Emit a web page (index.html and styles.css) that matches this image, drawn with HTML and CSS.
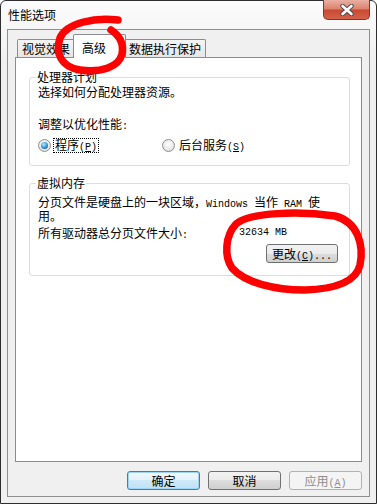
FILE: index.html
```html
<!DOCTYPE html>
<html lang="zh-CN">
<head>
  <meta charset="UTF-8">
  <title>性能选项</title>
  <link rel="stylesheet" href="styles.css">
</head>
<body>
  <div class="window">
    <div class="titlebar">
      <div class="title">性能选项</div>
      <button class="close" title="关闭">
        <svg width="14" height="12" viewBox="0 0 14 12">
          <path d="M2.5 2 L11.5 10 M11.5 2 L2.5 10" stroke="#4a4a4a" stroke-width="4.4" stroke-linecap="round"/>
          <path d="M2.5 2 L11.5 10 M11.5 2 L2.5 10" stroke="#ffffff" stroke-width="2.6" stroke-linecap="round"/>
        </svg>
      </button>
    </div>

    <div class="client">
      <div class="tabs">
        <div class="tab tab-visual">视觉效果</div>
        <div class="tab active">高级</div>
        <div class="tab tab-dep">数据执行保护</div>
      </div>

      <div class="panel">
        <fieldset class="group">
          <legend>处理器计划</legend>
          <p class="line">选择如何分配处理器资源。</p>
          <p class="line adjust">调整以优化性能<span class="lat">:</span></p>
          <div class="radios">
            <label class="option">
              <span class="radio on"></span>
              <span class="caption focus">程序<span class="lat">(<u>P</u>)</span></span>
            </label>
            <label class="option">
              <span class="radio"></span>
              <span class="caption">后台服务<span class="lat">(<u>S</u>)</span></span>
            </label>
          </div>
        </fieldset>

        <fieldset class="group group-vm">
          <legend>虚拟内存</legend>
          <p class="line note">分页文件是硬盘上的一块区域，<span class="lat">Windows </span>当作<span class="lat"> RAM </span>使用。</p>
          <div class="size-row">
            <span>所有驱动器总分页文件大小<span class="lat">:</span></span>
            <span class="lat">32634 MB</span>
          </div>
          <div class="change-row">
            <button class="btn btn-change">更改<span class="lat">(<u>C</u>)...</span></button>
          </div>
        </fieldset>
      </div>

      <div class="actions">
        <button class="btn default">确定</button>
        <button class="btn">取消</button>
        <button class="btn" disabled>应用<span class="lat">(<u>A</u>)</span></button>
      </div>
    </div>

    <svg class="marks" width="377" height="504" viewBox="0 0 377 504">
      <path d="M118 20 C 95 17, 66 23, 60 38 C 55 53, 61 67, 80 70 C 101 73, 119 67, 122 54 C 124 44, 120 36, 111 30" />
      <path d="M236 224 C 250 212, 300 211, 335 216 C 358 222, 364 245, 360 265 C 356 282, 335 289, 305 290 C 275 290, 245 283, 232 268 C 224 256, 225 236, 236 224 Z" />
    </svg>
  </div>
</body>
</html>
```

FILE: styles.css
```css
* {
  box-sizing: border-box;
}
body {
  margin: 0;
  font-family: "Noto Sans CJK SC", sans-serif;
  font-size: 12px;
  color: #000;
}
.window {
  position: relative;
  width: 377px;
  height: 504px;
  border: 1px solid #2e2e2e;
  border-radius: 6px 6px 0 0;
  background: linear-gradient(#fcfcfc, #f0f0f0 60px);
  padding: 0 6px 6px;
  display: flex;
  flex-direction: column;
}
.titlebar {
  height: 28px;
  display: flex;
  justify-content: space-between;
  align-items: flex-start;
}
.title {
  margin: 7px 0 0 1px;
  line-height: 14px;
}
.close {
  width: 47px;
  height: 20px;
  margin-top: -1px;
  padding: 0;
  border: 1px solid #8a3324;
  border-top: 0;
  border-radius: 0 0 5px 5px;
  background: linear-gradient(#eab0a2, #dc8470 45%, #c84a33 55%, #d4634c);
  display: flex;
  align-items: center;
  justify-content: center;
}
.client {
  flex: 1;
  border: 1px solid #8e8f8f;
  background: #f0f0f0;
  padding: 4px 7px 0;
  display: flex;
  flex-direction: column;
}

/* tabs */
.tabs {
  display: flex;
  align-items: flex-end;
  height: 23px;
  padding-left: 2px;
}
.tab {
  height: 18px;
  border: 1px solid #898c95;
  border-bottom: 0;
  border-radius: 2px 2px 0 0;
  background: linear-gradient(#f4f4f4, #e6e6e6);
  line-height: 17px;
  text-align: center;
}
.tab-visual {
  width: 58px;
}
.tab-dep {
  width: 82px;
}
.tab.active {
  position: relative;
  width: 53px;
  height: 24px;
  margin: 0 -2px -1px;
  padding: 2px 0 0 8px;
  background: #fff;
  line-height: 22px;
  text-align: left;
}
.panel {
  height: 405px;
  border: 1px solid #898c95;
  background: #fff;
  padding: 12px 11px 0 13px;
}

/* group boxes */
.group {
  margin: 0;
  min-width: 0;
  border: 1px solid #d5dfe5;
  border-radius: 3px;
  padding: 1px 11px 14px 8px;
}
.group legend {
  padding: 0 1px;
  margin-left: -2px;
  line-height: 14px;
}
.group-vm {
  margin-top: 10px;
  padding-top: 5px;
  padding-bottom: 12px;
}
.line {
  margin: 0;
  line-height: 13px;
}
.adjust {
  margin-top: 19px;
}
.note {
  width: 288px;
}
.lat {
  font-family: "Liberation Mono", monospace;
  font-size: 10px;
  line-height: 8px;
}

/* radios */
.radios {
  display: grid;
  grid-template-columns: 124px auto;
  margin-top: 7px;
  height: 13px;
}
.option {
  display: flex;
  align-items: center;
}
.radio {
  width: 13px;
  height: 13px;
  border-radius: 50%;
  border: 1px solid #8e8f8f;
  background: radial-gradient(circle at 50% 40%, #ffffff, #e6e6e6 65%, #cdcdcd);
  display: flex;
  align-items: center;
  justify-content: center;
}
.radio.on::after {
  content: "";
  width: 7px;
  height: 7px;
  border-radius: 50%;
  background: radial-gradient(circle at 40% 35%, #b4ecff, #2b93d6 55%, #0d3f6e);
}
.caption {
  margin-left: 2px;
  padding: 0 1px;
  border: 1px dotted transparent;
  line-height: 11px;
}
.caption.focus {
  border-color: #000;
}

/* virtual memory */
.size-row {
  display: grid;
  grid-template-columns: 201px auto;
  align-items: center;
  margin-top: 4px;
  height: 13px;
  line-height: 13px;
}
.change-row {
  display: flex;
  justify-content: flex-end;
  margin-top: 5px;
}

/* buttons */
.btn {
  width: 73px;
  height: 19px;
  padding: 0;
  border: 1px solid #707070;
  border-radius: 3px;
  background: linear-gradient(#f2f2f2, #ebebeb 50%, #dddddd 50%, #cfcfcf);
  font: inherit;
  color: #000;
  line-height: 17px;
}
.btn-change {
  width: 72px;
}
.btn.default {
  border-color: #3c7fb1;
  background: linear-gradient(#f0f8fd, #e3f2fb 50%, #cfe9f9 50%, #bfe1f6);
  box-shadow: inset 0 0 0 1px #9fd5f3;
}
.btn:disabled {
  border-color: #adb2b5;
  background: #f4f4f4;
  color: #8d8d8d;
}
.actions {
  display: flex;
  justify-content: flex-end;
  gap: 8px;
  margin-top: 9px;
}

/* red hand-drawn marks on top of the dialog */
.marks {
  position: absolute;
  top: -1px;
  left: -1px;
  pointer-events: none;
}
.marks path {
  fill: none;
  stroke: #ff0000;
  stroke-width: 7.5;
  stroke-linecap: round;
  stroke-linejoin: round;
}
```
